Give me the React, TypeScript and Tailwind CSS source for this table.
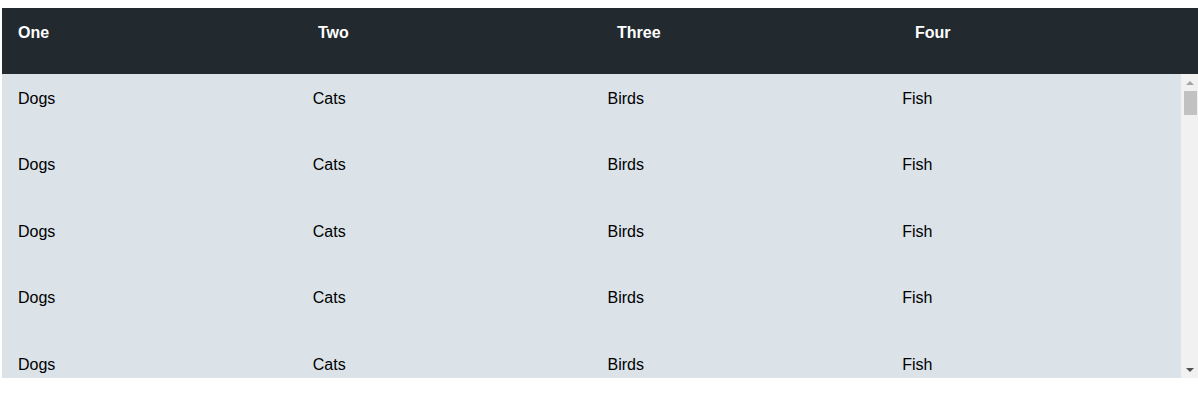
const HEADERS = ["One", "Two", "Three", "Four"];
const ROW = ["Dogs", "Cats", "Birds", "Fish"];
const ROWS = Array.from({ length: 5 }, () => ROW);

function Scrollbar() {
  return (
    <div className="w-[17px] shrink-0 bg-[#f1f1f1] flex flex-col items-center">
      <div className="h-[17px] w-full flex items-center justify-center">
        <svg width="8" height="4" viewBox="0 0 8 4">
          <polygon points="0,4 8,4 4,0" fill="#a3a3a3" />
        </svg>
      </div>
      <div className="w-[13px] h-[24px] ml-[1px] bg-[#c1c1c1]" />
      <div className="flex-1" />
      <div className="h-[17px] w-full flex items-center justify-center">
        <svg width="8" height="4" viewBox="0 0 8 4">
          <polygon points="0,0 8,0 4,4" fill="#505050" />
        </svg>
      </div>
    </div>
  );
}

export default function App() {
  return (
    <div className="w-[1198px] h-[402px] bg-white pt-[8px] pl-[2px] font-['Liberation_Sans',Arial,sans-serif]">
      <div className="w-[1196px]">
        {/* Header */}
        <div className="grid grid-cols-[300px_299px_298px_1fr] h-[66px] bg-[#222a30]">
          {HEADERS.map((h) => (
            <div key={h} className="pl-[16px] pt-[16px] text-[16px] leading-[18px] font-bold text-white">
              {h}
            </div>
          ))}
        </div>

        {/* Body */}
        <div className="flex h-[304px] bg-[#dbe3e9]">
          <div className="flex-1 overflow-hidden">
            {ROWS.map((row, i) => (
              <div key={i} className="grid grid-cols-4 h-[66.4px]">
                {row.map((c) => (
                  <div key={c} className="pl-[16px] pt-[16px] text-[16px] leading-[18px] text-black">
                    {c}
                  </div>
                ))}
              </div>
            ))}
          </div>
          <Scrollbar />
        </div>
      </div>
    </div>
  );
}
